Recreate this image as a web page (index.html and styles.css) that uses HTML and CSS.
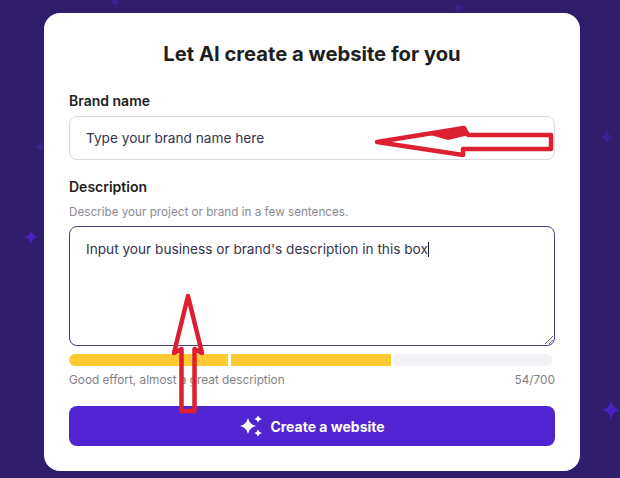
FILE: index.html
```html
<!DOCTYPE html>
<html lang="en">
<head>
<meta charset="utf-8">
<title>Let AI create a website for you</title>
<link rel="stylesheet" href="styles.css">
</head>
<body>
<svg class="stars" width="620" height="478" viewBox="0 0 620 478" aria-hidden="true">
  <path class="star-bright" d="M31 230 Q32 236 38 237 Q32 238 31 244 Q30 238 24 237 Q30 236 31 230Z"/>
  <path class="star-bright" d="M611 400 Q612 408 620 410 Q612 412 611 420 Q610 412 602 410 Q610 408 611 400Z"/>
  <path class="star-faint" d="M41 141 Q42 146 47 147 Q42 148 41 153 Q40 148 35 147 Q40 146 41 141Z"/>
  <path class="star-faint" d="M607 130 Q608 136 614 137 Q608 138 607 144 Q606 138 600 137 Q606 136 607 130Z"/>
  <path class="star-faint" d="M115 -4 Q116 1 121 2 Q116 3 115 8 Q114 3 109 2 Q114 1 115 -4Z"/>
  <path class="star-faint" d="M458 3 Q459 7 463 8 Q459 9 458 13 Q457 9 453 8 Q457 7 458 3Z"/>
</svg>
<main class="card">
  <h1 class="title">Let AI create a website for you</h1>
  <div class="label brand-label">Brand name</div>
  <div class="field input">Type your brand name here</div>
  <div class="label desc-label">Description</div>
  <div class="hint">Describe your project or brand in a few sentences.</div>
  <div class="field textarea">
    <span>Input your business or brand's description in this box</span><span class="caret"></span>
    <svg class="grip" width="10" height="10" viewBox="0 0 10 10" aria-hidden="true"><path d="M1 9 9 1M5 9 9 5"/></svg>
  </div>
  <div class="progress">
    <div class="seg filled"></div>
    <div class="seg filled"></div>
    <div class="seg empty"></div>
  </div>
  <div class="meta"><span>Good effort, almost a great description</span><span>54/700</span></div>
  <button class="cta" type="button">
    <svg class="sparkle" width="24" height="24" viewBox="0 0 24 24" aria-hidden="true">
      <path d="M9 4 Q10.5 10.500 17 12 Q10.5 13.500 9 20 Q7.5 13.500 1 12 Q7.5 10.500 9 4Z"/>
      <path d="M19 1.500 Q19.800 4.200 23 5 Q19.800 5.800 19 8.500 Q18.200 5.800 15.200 5 Q18.200 4.200 19 1.500Z"/>
      <path d="M19 15.500 Q19.800 18.200 23 19 Q19.800 19.800 19 22.500 Q18.200 19.800 15.200 19 Q18.200 18.200 19 15.500Z"/>
    </svg>
    <span>Create a website</span>
  </button>
</main>
<svg class="arrows" width="620" height="478" viewBox="0 0 620 478" aria-hidden="true">
  <path class="arrow" d="M377 142 L464 128 L468 135 L551 135 L551 149 L463 149 L463 155 Z"/>
  <path class="arrow-fill" d="M427 134 L465 127 L469 135 L448 140 Z"/>
  <path class="arrow" d="M188 296 L202 353 L194.500 349 L194.500 411 L181.500 411 L181.500 349 L174 353 Z"/>
</svg>
</body>
</html>
```
FILE: styles.css
```css
* { box-sizing: border-box; }
html, body { margin: 0; padding: 0; }
body {
  width: 620px;
  height: 478px;
  overflow: hidden;
  background: #2f1c6a;
  font-family: "Inter", "Liberation Sans", sans-serif;
  color: #1d1e20;
  position: relative;
  padding: 13px 40px 7px 44px;
}
.stars, .arrows { position: absolute; left: 0; top: 0; }
.arrows { z-index: 2; }
.star-bright { fill: #4a22c0; }
.star-faint { fill: #3b2290; }
.card {
  position: relative;
  width: 536px;
  height: 458px;
  background: #fff;
  border-radius: 16px;
  padding: 28px 25px 0;
  display: flex;
  flex-direction: column;
}
.title {
  margin: 0;
  height: 26px;
  line-height: 26px;
  font-size: 20.2px;
  font-weight: 700;
  text-align: center;
}
.label {
  font-size: 14px;
  line-height: 18px;
  font-weight: 600;
}
.brand-label { margin-top: 25px; }
.field {
  width: 486px;
  border-radius: 8px;
  font-size: 13.65px;
  color: #36344d;
  background: #fff;
}
.input {
  margin-top: 6px;
  height: 44px;
  line-height: 42px;
  padding-left: 16px;
  border: 1px solid #dadce0;
}
.desc-label { margin-top: 18px; }
.hint {
  margin-top: 9px;
  font-size: 11.7px;
  line-height: 14px;
  color: #8a8a96;
}
.textarea {
  position: relative;
  margin-top: 7px;
  height: 120px;
  border: 1px solid #4d3a80;
  padding: 13px 16px 0;
  line-height: 18px;
}
.caret {
  display: inline-block;
  width: 1px;
  height: 15px;
  background: #1d1e20;
  vertical-align: -3px;
}
.grip { position: absolute; right: 0; bottom: 0; }
.grip path { fill: none; stroke: #6d6a78; stroke-width: 1; }
.progress {
  margin-top: 8px;
  width: 484px;
  height: 12px;
  display: flex;
  gap: 3px;
}
.seg { flex: 1 1 0; }
.seg.filled { background: #ffc933; }
.seg:first-child { border-radius: 6px 0 0 6px; }
.seg.empty { background: #f2f3f6; border-radius: 0 6px 6px 0; }
.meta {
  margin-top: 7px;
  width: 486px;
  display: flex;
  justify-content: space-between;
  font-size: 11.8px;
  line-height: 14px;
  color: #7f7f8a;
}
.cta {
  margin-top: 19px;
  width: 486px;
  height: 40px;
  border: 0;
  border-radius: 8px;
  background: #5025d1;
  color: #fff;
  font-family: inherit;
  font-size: 14px;
  font-weight: 700;
  display: flex;
  align-items: center;
  justify-content: center;
  gap: 7px;
  padding: 0;
}
.sparkle path { fill: #fff; }
.arrow { fill: none; stroke: #dc2030; stroke-width: 4.5; stroke-linejoin: round; }
.arrow-fill { fill: #dc2030; }
```
